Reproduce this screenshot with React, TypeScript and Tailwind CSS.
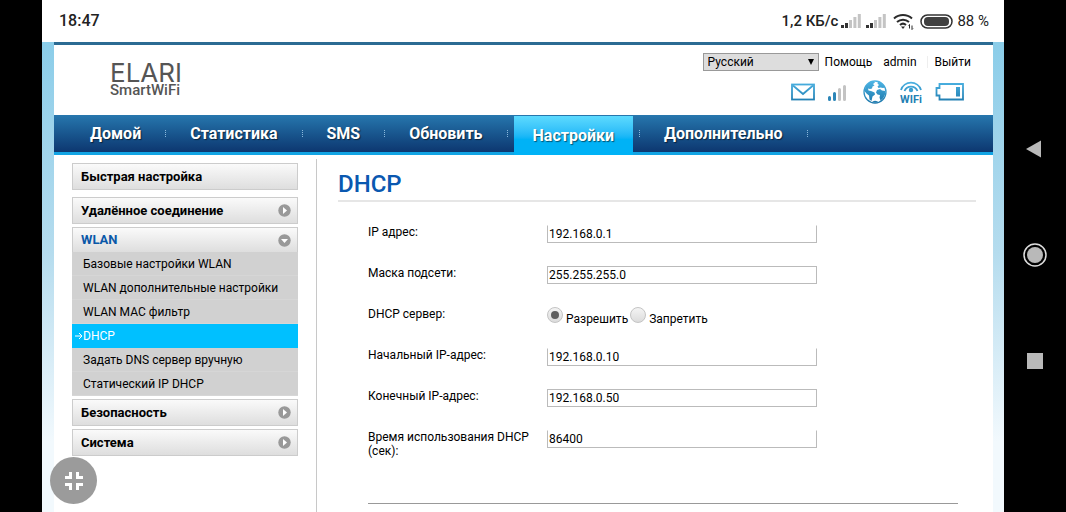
import React, { useState } from 'react';
import { clsx } from 'clsx';

const NAV = ['Домой', 'Статистика', 'SMS', 'Обновить', 'Настройки', 'Дополнительно'];

const WLAN_ITEMS = [
  'Базовые настройки WLAN',
  'WLAN дополнительные настройки',
  'WLAN MAC фильтр',
  'DHCP',
  'Задать DNS сервер вручную',
  'Статический IP DHCP',
];

export default function App() {
  return (
    <div className="flex min-h-screen bg-black font-['Roboto',sans-serif] text-black">
      <div className="flex-1 min-w-0 ml-[42px] flex flex-col bg-white">
        <StatusBar />
        <div className="flex-1 flex flex-col bg-linear-to-b from-[#8bcde9] via-[#b5dcee] via-45% to-[#f2f9fd] to-85% pl-3 pr-[11px]">
          <div className="flex-1 flex flex-col bg-white border-t-3 border-[#2b6b93]">
            <Header />
            <MainNav />
            <div className="flex-1 flex pt-1">
              <Sidebar />
              <DhcpForm />
            </div>
          </div>
        </div>
      </div>
      <SystemKeys />
      <button
        type="button"
        aria-label="Свернуть"
        className="fixed left-[50px] bottom-2 w-[47px] h-[47px] rounded-full bg-[#9b9b9b] flex items-center justify-center"
      >
        <svg width="20" height="20" viewBox="0 0 20 20" fill="none" stroke="#fff" strokeWidth="3">
          <path d="M1 6.500h5.500V1M19 6.500h-5.500V1M1 13.500h5.500V19M19 13.500h-5.500V19" />
        </svg>
      </button>
    </div>
  );
}

// ── Phone chrome ────────────────────────────────────────────────────────────

const CellSignal: React.FC = () => (
  <svg width="20" height="14" viewBox="0 0 20 14" fill="#333" className="shrink-0">
    <path d="M0 11h3v3H0zM4 9h3v5H4z" />
    <path fill="#c4c4c4" d="M8 6h3v8H8zM12.400 3h3v11h-3zM16.800 0h3v14h-3z" />
  </svg>
);

const StatusBar: React.FC = () => (
  <div className="h-[42px] shrink-0 flex items-center justify-between pl-[17px] pr-[15px] text-[15px] text-[#222]">
    <span className="font-medium text-base">18:47</span>
    <div className="flex items-center">
      <span className="font-medium mr-[3px]">1,2 КБ/с</span>
      <CellSignal />
      <span className="w-[5px]" />
      <CellSignal />
      <svg width="22" height="17" viewBox="0 0 22 17" fill="none" stroke="#2b2b2b" strokeWidth="2" className="ml-[7px] shrink-0">
        <path d="M1 5.500a13.500 13.500 0 0 1 18 0M4 9a9 9 0 0 1 12 0M7 12a4.500 4.500 0 0 1 6 0" />
        <path d="M8 13.500h4L10 16z" fill="#2b2b2b" stroke="none" />
        <path d="M16.500 11.500v4M19 12.500v4M15.500 12.500l1-1M20 15.500l-1 1" strokeWidth="1" />
      </svg>
      <svg width="33" height="15" viewBox="0 0 33 15" className="ml-[5px] mr-1 shrink-0">
        <rect x="1" y="1" width="31" height="13" rx="6.500" fill="none" stroke="#333" strokeWidth="1.500" />
        <rect x="4" y="3" width="25" height="9" rx="4" fill="#404040" />
      </svg>
      <span>88 %</span>
    </div>
  </div>
);

const SystemKeys: React.FC = () => (
  <div className="w-[62px] shrink-0 flex flex-col items-center justify-center gap-[82px] pb-[2px]">
    <button type="button" aria-label="Назад">
      <svg width="24" height="24" viewBox="0 0 24 24" fill="#b9b9b9"><path d="M3 12 18 3.500v17z" /></svg>
    </button>
    <button type="button" aria-label="Домой">
      <svg width="24" height="24" viewBox="0 0 24 24" fill="#b9b9b9">
        <circle cx="12" cy="12" r="8" />
        <circle cx="12" cy="12" r="11" fill="none" stroke="#ddd" strokeWidth="1.500" />
      </svg>
    </button>
    <button type="button" aria-label="Недавние">
      <svg width="24" height="24" viewBox="0 0 24 24" fill="#b9b9b9"><path d="M4 4h16v16H4z" /></svg>
    </button>
  </div>
);

// ── Header ──────────────────────────────────────────────────────────────────

const Header: React.FC = () => (
  <header className="h-[70px] flex justify-between pl-14 pr-[22px]">
    <div className="pt-[18px] text-[#555]">
      <div className="text-[26px] leading-[19px] font-['Inter',sans-serif]">ELARI</div>
      <div className="text-[15px] leading-4 font-medium">SmartWiFi</div>
    </div>
    <div className="pt-2 flex flex-col items-end">
      <div className="flex items-center text-xs h-[18px]">
        <div className="relative mr-[6px]">
          <select aria-label="Язык" className="block appearance-none w-[116px] h-[18px] pl-1 bg-[#ddd] border border-[#999] text-xs leading-4">
            <option>Русский</option>
          </select>
          <svg width="6" height="6" viewBox="0 0 6 6" className="absolute right-[5px] top-[6px] pointer-events-none"><path d="M0 0h6L3 6z" /></svg>
        </div>
        <a href="#help">Помощь</a>
        <a href="#admin" className="ml-[11px]">admin</a>
        <span className="w-px h-3 bg-[#eee] ml-[10px] mr-[7px]" />
        <a href="#logout">Выйти</a>
      </div>
      <StatusIcons />
    </div>
  </header>
);

const StatusIcons: React.FC = () => (
  <div className="flex items-center mt-2 mr-[6px]">
    <svg width="24" height="26" viewBox="0 0 24 26" fill="none" stroke="url(#ico)" strokeWidth="1.800">
      <defs>
        <linearGradient id="ico" gradientUnits="userSpaceOnUse" x1="0" y1="2" x2="0" y2="24">
          <stop offset="0" stopColor="#4db4e4" />
          <stop offset="1" stopColor="#1c78ac" />
        </linearGradient>
      </defs>
      <rect x="1" y="5.500" width="22" height="15" />
      <path d="M2 6.500l10 8.500L22 6.500" />
    </svg>
    <svg width="20" height="26" viewBox="0 0 20 26" strokeLinecap="round" strokeWidth="3" className="ml-3">
      <path d="M2.500 18.500v2M7.500 14.500v6" stroke="#2c86b8" />
      <path d="M12.500 10.500v10M17.500 7.500v13" stroke="#c3c3c3" />
    </svg>
    <svg width="24" height="26" viewBox="0 0 24 26" className="ml-4">
      <circle cx="12" cy="13" r="11" fill="#fff" stroke="url(#ico)" strokeWidth="1.300" />
      <path
        fill="url(#ico)"
        d="M2.500 8C4.500 4 7.500 2.500 10.500 2.200l1.500 1.300-2 1.500 1.500 1.500-2 1-.5 2-2 .5-2-.5.500 2 2.500.5 3.500 1.500.5 2-2.500 2-1 4.500-2-1.500-.5-4-2.500-2-2-2.500zM15 2.500c3 .8 5.500 2.800 7 6l-2 .5-2.500-.5-2 .5-1-1.500 1.500-1.500-1.500-1.500zM14 11l3-1 2 1.500 3.500.5c0 3-1 5.500-3 8l-2 1.500-1-3 .5-2.500-2.500-.5-1.500-2zM9 22.500l3-.8 3.500.8-3.500 1z"
      />
    </svg>
    <svg width="24" height="26" viewBox="0 0 24 26" fill="none" stroke="url(#ico)" className="ml-3">
      <path d="M2 11a10.500 10.500 0 0 1 20 0M5.500 12a7 7 0 0 1 13 0" strokeWidth="1.800" />
      <circle cx="12" cy="11" r="2.200" fill="#3d9fd0" stroke="none" />
      <text x="12" y="24" textAnchor="middle" fontSize="11" fontWeight="700" fill="#2380b3" stroke="none">WIFi</text>
    </svg>
    <svg width="30" height="26" viewBox="0 0 30 26" fill="none" stroke="url(#ico)" className="ml-3">
      <path d="M4.500 5H28v15.500H4.500V16.500h-3V9h3z" strokeWidth="1.800" />
      <rect x="21" y="8" width="4" height="9.500" fill="url(#ico)" stroke="none" />
    </svg>
  </div>
);

const MainNav: React.FC = () => (
  <nav className="flex h-10 pl-3 border-b-3 border-[#12a4e4] bg-linear-to-b from-[#2777ae] to-[#0d3770] text-white text-base font-bold">
    {NAV.map(label => {
      const active = label === 'Настройки';
      return (
        <div key={label} className="flex items-center">
          <a
            href="#nav"
            className={clsx('self-stretch flex items-center [text-shadow:1px_1px_1px_#0008]',
              active ? 'px-[19px] mx-[6px] mt-px -mb-[3px] bg-linear-to-b from-[#5cdafe] to-[#00b2f6] to-60%' : 'px-6 pt-px')}
          >
            {label}
          </a>
          <span className="h-[7px] border-l border-dotted border-[#8ab8dc]" />
        </div>
      );
    })}
  </nav>
);

// ── Sidebar ─────────────────────────────────────────────────────────────────

interface MenuHeadProps {
  label: string;
  arrow?: 'right' | 'down';
}

const MenuHead: React.FC<MenuHeadProps> = ({ label, arrow }) => (
  <button
    type="button"
    className={clsx('w-full flex items-center justify-between pl-2 pr-[6px] border border-[#ccc] bg-linear-to-b from-[#fafafa] to-[#dedede] text-[13px] font-bold',
      arrow === 'down' ? 'h-[25px] border-b-0 text-[#0a58a8]' : 'h-[27px]')}
  >
    {label}
    {arrow && (
      <svg width="13" height="13" viewBox="0 0 13 13">
        <circle cx="6.500" cy="6.500" r="6.200" fill="#999" />
        <path fill="#fff" d={arrow === 'down' ? 'M3 5h7L6.500 9z' : 'M5 3v7l4-3.500z'} />
      </svg>
    )}
  </button>
);

const Sidebar: React.FC = () => (
  <aside className="w-[226px] shrink-0 ml-[18px] mr-[18px] pt-1">
    <MenuHead label="Быстрая настройка" />
    <div className="mt-[7px] flex flex-col gap-[3px]">
      <MenuHead label="Удалённое соединение" arrow="right" />
      <div>
        <MenuHead label="WLAN" arrow="down" />
        <ul className="text-xs">
          {WLAN_ITEMS.map(item => {
            const active = item === 'DHCP';
            return (
              <li key={item} className={clsx('h-6 border-b', active ? 'bg-[#00c0ff] border-[#00c0ff] text-white' : 'bg-[#d1d1d1] border-[#d6d6d6]')}>
                <a href="#menu" className="h-full flex items-center pl-[3px]">
                  <svg width="8" height="8" viewBox="0 0 8 8" fill="none" stroke={active ? '#fff' : 'none'}>
                    <path d="M0 4h7M4 1l3 3-3 3" />
                  </svg>
                  {item}
                </a>
              </li>
            );
          })}
        </ul>
      </div>
      <MenuHead label="Безопасность" arrow="right" />
      <MenuHead label="Система" arrow="right" />
    </div>
  </aside>
);

// ── DHCP settings ───────────────────────────────────────────────────────────

interface FieldProps {
  id: string;
  label: string;
  initial: string;
  openTop?: boolean;
}

const Field: React.FC<FieldProps> = ({ id, label, initial, openTop }) => {
  const [value, setValue] = useState(initial);
  return (
    <div className="flex items-start h-[41px]">
      <label htmlFor={id} className="w-[179px] shrink-0 leading-[14px]">{label}</label>
      <input
        id={id}
        type="text"
        value={value}
        onChange={e => setValue(e.target.value)}
        className={clsx('w-[270px] h-[18px] px-px border border-[#bbb] rounded-none', openTop && 'border-t-white')}
      />
    </div>
  );
};

const RADIO_CLS = "appearance-none w-4 h-4 rounded-full border border-[#c4c4c4] bg-linear-to-b from-[#f4f4f4] to-[#dcdcdc] flex items-center justify-center checked:before:content-[''] checked:before:w-2 checked:before:h-2 checked:before:rounded-full checked:before:bg-[#606060]";

const DhcpForm: React.FC = () => (
  <main className="flex-1 min-w-0 border-l border-[#c8c8c8] pl-[21px] pr-[17px]">
    <h1 className="pt-3 pb-[3px] text-2xl leading-[26px] font-medium text-[#0a58b0] border-b-2 border-[#e6e6e6]">DHCP</h1>
    <form className="pt-[23px] pl-[30px] pr-[18px] text-xs">
      <Field id="ip" label="IP адрес:" initial="192.168.0.1" openTop />
      <Field id="mask" label="Маска подсети:" initial="255.255.255.0" />
      <div role="radiogroup" aria-labelledby="server" className="flex items-start h-[41px]">
        <span id="server" className="w-[179px] shrink-0 leading-[14px]">DHCP сервер:</span>
        <label className="flex items-start gap-[3px] mr-[2px]">
          <input type="radio" name="dhcp" defaultChecked className={RADIO_CLS} />
          <span className="pt-1">Разрешить</span>
        </label>
        <label className="flex items-start gap-[3px]">
          <input type="radio" name="dhcp" className={RADIO_CLS} />
          <span className="pt-1">Запретить</span>
        </label>
      </div>
      <Field id="start" label="Начальный IP-адрес:" initial="192.168.0.10" openTop />
      <Field id="end" label="Конечный IP-адрес:" initial="192.168.0.50" />
      <Field id="lease" label="Время использования DHCP (сек):" initial="86400" openTop />
      <hr className="mt-8 border-[#999]" />
    </form>
  </main>
);
